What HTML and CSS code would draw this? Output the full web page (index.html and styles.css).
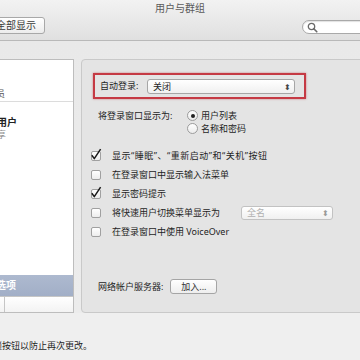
FILE: index.html
```html
<!DOCTYPE html>
<html lang="zh-CN">
<head>
<meta charset="utf-8">
<link rel="stylesheet" href="styles.css">
</head>
<body>
<div class="window">
  <div class="toolbar">
    <div class="title">用户与群组</div>
    <div class="tools">
      <div class="navs"><span class="nav">‹</span><span class="nav">›</span></div>
      <div class="showall">全部显示</div>
      <div class="spacer"></div>
      <div class="search">
        <svg width="11" height="11" viewBox="0 0 11 11"><circle cx="4.5" cy="4.5" r="3.2" fill="none" stroke="#6a6a6a" stroke-width="1.3"/><path d="M6.8 6.8 L9.8 9.8" stroke="#6a6a6a" stroke-width="1.6" stroke-linecap="round"/></svg>
      </div>
    </div>
  </div>
  <div class="content">
    <div class="sidebar">
      <div class="list">
        <div class="hdr">当前用户</div>
        <div class="user">
          <div class="name">用户</div>
          <div class="sub">管理员</div>
        </div>
        <div class="sep"></div>
        <div class="hdr2">其他用户</div>
        <div class="user guest">
          <div class="name">访客用户</div>
          <div class="sub">仅共享</div>
        </div>
        <div class="fill"></div>
        <div class="item selected">登录选项</div>
      </div>
      <div class="bar"><span class="bbtn">+</span><span class="bbtn">−</span><span class="bbtn">⚙</span><span class="bbtn last"></span></div>
    </div>
    <div class="panel">
      <div class="hl">
        <span class="lbl">自动登录:</span>
        <div class="popup"><span>关闭</span><span class="arrows">⬍</span></div>
      </div>
      <div class="radios">
        <span class="lbl">将登录窗口显示为:</span>
        <label class="opt"><span class="radio on"></span>用户列表</label>
        <span></span>
        <label class="opt"><span class="radio"></span>名称和密码</label>
      </div>
      <div class="checks">
        <div class="chk"><span class="box"><svg width="12" height="13" viewBox="0 0 12 13"><path d="M1.8 7.2 L4.3 10.6 L10.6 1.2" fill="none" stroke="#1a1a1a" stroke-width="1.5" stroke-linejoin="round"/></svg></span><span class="q">显示“睡眠”、“重新启动”和“关机”按钮</span></div>
        <div class="chk"><span class="box"></span>在登录窗口中显示输入法菜单</div>
        <div class="chk"><span class="box"><svg width="12" height="13" viewBox="0 0 12 13"><path d="M1.8 7.2 L4.3 10.6 L10.6 1.2" fill="none" stroke="#1a1a1a" stroke-width="1.5" stroke-linejoin="round"/></svg></span>显示密码提示</div>
        <div class="chk"><span class="box"></span>将快速用户切换菜单显示为<div class="popup dis"><span>全名</span><span class="arrows">⬍</span></div></div>
        <div class="chk"><span class="box"></span>在登录窗口中使用 VoiceOver</div>
      </div>
      <div class="net">
        <span class="lbl">网络帐户服务器:</span>
        <div class="btn">加入...</div>
      </div>
    </div>
  </div>
  <div class="footer">
    <span class="lock"></span>
    <span class="note">点按锁按钮以防止再次更改。</span>
  </div>
</div>
</body>
</html>
```
FILE: styles.css
```css
html, body {
  margin: 0;
  padding: 0;
  width: 360px;
  height: 360px;
  overflow: hidden;
  background: #efefef;
}
.window {
  margin-left: -100px;
  width: 560px;
  font-family: "Noto Sans", "Noto Sans CJK SC", sans-serif;
  font-size: 9px;
  color: #1e1e1e;
}
.toolbar {
  height: 40px;
  background: linear-gradient(#f2f2f2, #e0e0e0);
  border-bottom: 1px solid #b9b9b9;
  box-sizing: content-box;
}
.title {
  height: 17px;
  text-align: center;
  font-size: 10px;
  line-height: 17px;
  color: #5a5a5a;
}
.tools {
  display: flex;
  align-items: flex-start;
  height: 17px;
  padding-left: 20px;
}
.navs {
  display: flex;
  width: 48px;
  height: 16px;
  margin-right: 20px;
  flex: none;
}
.nav {
  flex: 1;
  border: 1px solid #a0a0a0;
  text-align: center;
  line-height: 14px;
}
.showall {
  flex: none;
  height: 15px;
  padding: 0 8px 0 7px;
  border: 1px solid #a8a8a8;
  border-radius: 3px;
  background: linear-gradient(#ffffff, #ececec);
  font-size: 10px;
  line-height: 15px;
  color: #3a3a3a;
}
.spacer { flex: 1; }
.search {
  flex: none;
  width: 152px;
  height: 12px;
  margin-top: 3px;
  border: 1px solid #a9a9a9;
  border-radius: 7px;
  background: #fff;
  box-shadow: inset 0 1px 1px rgba(0,0,0,0.12);
  padding-left: 4px;
  display: flex;
  align-items: center;
}
.search svg { display: block; }
.content {
  display: flex;
  gap: 7px;
  padding: 18px 0 0 20px;
  height: 254px;
  background: linear-gradient(#e9e9e9, #ececec);
}
.sidebar {
  flex: none;
  width: 154px;
  box-sizing: border-box;
  border: 1px solid #bdbdbd;
  background: #fff;
  display: flex;
  flex-direction: column;
}
.list {
  flex: 1;
  display: flex;
  flex-direction: column;
}
.hdr, .hdr2 {
  height: 11px;
  padding-left: 6px;
  font-size: 8px;
  line-height: 11px;
  color: #8a8a8a;
  font-weight: bold;
}
.hdr2 { height: 12px; }
.user {
  height: 28px;
  padding-left: 57px;
  display: flex;
  flex-direction: column;
  justify-content: flex-end;
}
.user .name {
  font-size: 10px;
  line-height: 13px;
  font-weight: bold;
  color: #222;
}
.user .sub {
  font-size: 9px;
  line-height: 11px;
  color: #555;
}
.guest { height: 26px; padding-left: 56px; }
.guest .sub { color: #8d8d8d; margin-left: 2px; }
.sep {
  height: 1px;
  margin-top: 2px;
  background: #dcdcdc;
}
.fill { flex: 1; }
.item {
  height: 21px;
  padding-left: 55px;
  font-size: 10px;
  line-height: 21px;
}
.selected {
  background: linear-gradient(#adb9cf, #a2afc7);
  color: #fff;
  font-weight: bold;
}
.bar {
  height: 15px;
  border-top: 1px solid #c6c6c6;
  background: linear-gradient(#ffffff, #f3f3f3);
  display: flex;
}
.bbtn {
  width: 28px;
  border-right: 1px solid #c6c6c6;
  box-sizing: border-box;
  text-align: center;
  line-height: 15px;
  font-size: 10px;
  color: #444;
}
.bbtn.last { flex: 1; border-right: none; }
.panel {
  flex: none;
  width: 420px;
  box-sizing: border-box;
  border: 1px solid #c9c9c9;
  border-radius: 4px;
  background: #e4e4e4;
  display: flex;
  flex-direction: column;
}
.lbl {
  white-space: nowrap;
}
.hl {
  margin: 13px 0 0 11px;
  width: 213px;
  height: 26px;
  box-sizing: border-box;
  border: 2px solid #c53a44;
  box-shadow: 0 0 2px rgba(190, 40, 50, 0.55);
  display: flex;
  align-items: center;
  padding-left: 5px;
  line-height: 12px;
}
.hl .lbl { width: 47px; flex: none; }
.popup {
  flex: none;
  width: 148px;
  height: 15px;
  box-sizing: border-box;
  border: 1px solid #a6a6a6;
  border-radius: 3px;
  background: linear-gradient(#ffffff, #f0f0f0);
  display: flex;
  align-items: center;
  justify-content: space-between;
  padding: 0 3px 0 5px;
  line-height: 13px;
  color: #222;
}
.arrows {
  font-size: 8px;
  color: #444;
}
.radios {
  margin: 10px 0 0 16px;
  display: grid;
  grid-template-columns: 89px auto;
  grid-auto-rows: 13px;
  line-height: 13px;
  align-items: center;
}
.radios .lbl { line-height: 12px; }
.opt {
  display: flex;
  align-items: center;
  gap: 3px;
}
.radio {
  width: 9px;
  height: 9px;
  border: 1px solid #9c9c9c;
  border-radius: 50%;
  background: linear-gradient(#ffffff, #ececec);
  display: flex;
  align-items: center;
  justify-content: center;
}
.radio.on::after {
  content: "";
  width: 4px;
  height: 4px;
  border-radius: 50%;
  background: #222;
}
.checks {
  margin: 11px 0 0 9px;
  display: flex;
  flex-direction: column;
}
.chk {
  height: 19px;
  display: flex;
  align-items: center;
  gap: 11px;
  white-space: nowrap;
}
.q { letter-spacing: 0.5px; }
.box {
  position: relative;
  width: 10px;
  height: 10px;
  box-sizing: border-box;
  border: 1px solid #a0a0a0;
  border-radius: 2px;
  background: linear-gradient(#ffffff, #ededed);
  flex: none;
}
.box svg {
  position: absolute;
  left: -2px;
  top: -4px;
}
.popup.dis {
  width: 92px;
  height: 14px;
  margin-left: 10px;
  border-color: #c2c2c2;
  color: #b0b0b0;
}
.popup.dis .arrows { color: #9a9a9a; }
.net {
  margin: 38px 0 0 16px;
  display: flex;
  align-items: center;
  gap: 7px;
}
.btn {
  width: 47px;
  height: 15px;
  box-sizing: border-box;
  border: 1px solid #a5a5a5;
  border-radius: 3px;
  background: linear-gradient(#ffffff, #eeeeee);
  text-align: center;
  line-height: 13px;
  color: #333;
}
.footer {
  height: 47px;
  display: flex;
  align-items: center;
  padding: 0 0 0 20px;
  background: #efefef;
}
.lock {
  flex: none;
  width: 24px;
  height: 24px;
  margin-right: 31px;
}
.note {
  margin-top: 18px;
}
```
